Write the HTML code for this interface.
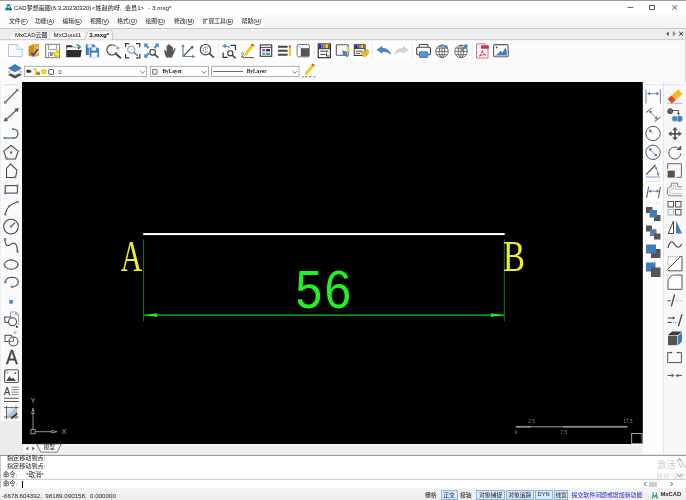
<!DOCTYPE html>
<html lang="zh-CN">
<head>
<meta charset="utf-8">
<title>CAD梦想画图</title>
<style>
*{box-sizing:border-box;margin:0;padding:0}
html,body{width:686px;height:500px;overflow:hidden;background:#f0f0f0}
body{font-family:"Liberation Sans","Noto Sans CJK SC",sans-serif;font-size:6px;color:#1a1a1a;position:relative}
.abs{position:absolute}
body>div{will-change:transform}
.t{position:absolute;white-space:nowrap;line-height:1}
svg{position:absolute;overflow:visible}
#titlebar{left:0;top:0;width:686px;height:15px;background:#fff;border-top:1px solid #9a9a9a}
#menubar{left:0;top:15px;width:686px;height:13px;background:linear-gradient(#f9f9f9,#f3f3f3)}
#tabbar{left:0;top:28px;width:686px;height:12px;background:#eeeeee;border-top:1px solid #c6c6c6}
#tb1{left:0;top:40px;width:686px;height:22px;background:#f9f9f9;border-top:1px solid #f3f3f3}
#tb2{left:0;top:62px;width:686px;height:20px;background:#f9f9f9}
#leftbar{left:0;top:82px;width:22px;height:373px;background:linear-gradient(90deg,#e4e8ee 0,#fbfbfb 1.500px,#f8f8f8 100%)}
#canvas{left:22px;top:82px;width:620px;height:362px;background:#000}
#rightbar{left:642px;top:82px;width:44px;height:373px;background:#f5f5f5}
#modelbar{left:22px;top:444px;width:620px;height:11px;background:linear-gradient(#f6f6f6,#efefef 25%,#efefef 75%,#f6f6f6)}
#cmd{left:0;top:455px;width:686px;height:33px;background:#fff;border-top:1px solid #9c9c9c}
#status{left:0;top:488px;width:686px;height:12px;background:linear-gradient(#f4f4f4,#eeeeee)}
.menu .t{top:4px;font-size:5.780px;color:#151515}
.menu u{text-decoration-thickness:0.500px;text-underline-offset:0.500px;text-decoration-color:#777}
.sbtn{position:absolute;top:2px;height:10px;border:1px solid #8fb2dc;background:#dce9f8}
</style>
</head>
<body>
<!-- title bar -->
<div id="titlebar" class="abs">
  <svg style="left:4.600px;top:3.200px" width="7.200" height="6.600" viewBox="0 0 9 9" preserveAspectRatio="none"><path d="M2.200 0.400h4.600v1.400H6.100l2.500 5H0.400l2.500-5H2.200z" fill="#2a8c84"/><path d="M0.400 6.400h8.200v2.200H0.400z" fill="#1d6b76"/><path d="M3.700 3h1.600l0.900 2.200H2.800z" fill="#dff2ee"/></svg>
  <span class="t" style="left:14px;top:3.900px;font-size:6px;color:#111">CAD梦想画图(6.3.20230320)</span>
  <span class="t" style="left:92px;top:3.900px;font-size:6.100px;color:#111">&lt;姓赵的呀, ,会员1&gt;</span>
  <span class="t" style="left:148.200px;top:3.900px;font-size:6.250px;color:#111">- 3.mxg*</span>
  <svg style="left:622px;top:-1px" width="64" height="15" viewBox="622 0 64 15">
    <path d="M627.600 7.400h5.600" stroke="#2a2a2a" stroke-width="0.800" fill="none"/>
    <rect x="649.700" y="5.300" width="4.700" height="4.400" stroke="#2a2a2a" stroke-width="0.800" fill="none"/>
    <path d="M672.500 5.200l4.500 4.500M677 5.200l-4.500 4.500" stroke="#2a2a2a" stroke-width="0.800" fill="none"/>
  </svg>
</div>
<!-- menu bar -->
<div id="menubar" class="abs menu">
  <div class="abs" style="left:0;top:0;width:264px;height:13px;background:#fbfbfb"></div>
  <span class="t" style="left:8.900px">文件(<u>F</u>)</span>
  <span class="t" style="left:35px">功能(<u>A</u>)</span>
  <span class="t" style="left:62.600px">编辑(<u>E</u>)</span>
  <span class="t" style="left:89.900px">视图(<u>V</u>)</span>
  <span class="t" style="left:117.200px">格式(<u>O</u>)</span>
  <span class="t" style="left:145.600px">绘图(<u>D</u>)</span>
  <span class="t" style="left:174px">修改(<u>M</u>)</span>
  <span class="t" style="left:202.700px">扩展工具(<u>E</u>)</span>
  <span class="t" style="left:241.800px">帮助(<u>H</u>)</span>
</div>
<!-- tab bar -->
<div id="tabbar" class="abs">
  <svg style="left:0;top:-1px" width="130" height="12" viewBox="0 28 130 12">
    <path d="M8.300 40L12.600 31.900Q13.100 31 14.200 31H48Q49.600 31 49.600 32.600V40z" fill="#f8f8f8" stroke="#d2d2d2" stroke-width="0.600"/>
    <path d="M49.600 40V32.600Q49.600 31 51.200 31H84Q85.600 31 85.600 32.600V40z" fill="#f8f8f8" stroke="#d2d2d2" stroke-width="0.600"/>
    <path d="M84.300 40L88 31.700Q88.400 30.800 89.600 30.800H111Q112.700 30.800 112.700 32.500V40z" fill="#fdfdfd" stroke="#b4b4b4" stroke-width="0.700"/>
  </svg>
  <span class="t" style="left:14.900px;top:2.600px;font-size:6px;color:#111">MxCAD云图</span>
  <span class="t" style="left:53.600px;top:2.600px;font-size:6.100px;color:#111">MxCloud1</span>
  <span class="t" style="left:89.200px;top:2.600px;font-size:6.100px;font-weight:bold;color:#000">3.mxg*</span>
  <div class="abs" style="left:0;top:10px;width:84px;height:1px;background:#cfcfcf"></div>
  <div class="abs" style="left:113px;top:10px;width:573px;height:1px;background:#cfcfcf"></div>
  <svg style="left:660px;top:-1px" width="26" height="12" viewBox="660 28 26 12">
    <path d="M668.700 31.400v4.600l-2.400-2.300z" fill="#3a3a3a"/><path d="M673.200 31.400v4.600l2.400-2.300z" fill="#9a9a9a" stroke="#555" stroke-width="0.400"/>
    <path d="M679.200 31.800l3.800 3.800M683 31.800l-3.800 3.800" stroke="#222" stroke-width="1" fill="none"/>
  </svg>
</div>
<!-- toolbar rows -->
<div id="tb1" class="abs">
<div class="abs" style="left:0;top:0;width:512px;height:22px;background:linear-gradient(#fefefe 70%,#fbfbfb)"></div>
<svg style="left:0;top:-1px" width="686" height="22" viewBox="0 40 686 22">
  <!-- 1 new -->
  <path d="M8.5 44.5h8.8l4.9 4.9v7.1H8.5z" fill="#f6f9fd" stroke="#a9bddb" stroke-width="0.9"/>
  <path d="M17.3 44.5v4.9h4.9" fill="#fff" stroke="#a9bddb" stroke-width="0.9"/>
  <!-- 2 orange doc -->
  <path d="M28.6 46.2l5.6-2.2v13l-5.6-1.3z" fill="#d78a20"/>
  <path d="M34.2 44h4.8v11.7l-4.8 1.3z" fill="#efa52d"/>
  <path d="M36 45.5l3 3v5l-3 1z" fill="#f6c25a"/>
  <path d="M31.3 52.8l2.1 2.6 4.4-6.4" stroke="#2a4da6" stroke-width="1.7" fill="none"/>
  <!-- 3 floppy -->
  <rect x="45.7" y="44.3" width="13.8" height="13.4" fill="#fafafa" stroke="#6e6e6e" stroke-width="0.9"/>
  <path d="M48.5 44.3v5.2h8v-5.2M48.5 57.5v-5h8.5" fill="none" stroke="#8a8a8a" stroke-width="0.8"/>
  <rect x="53" y="52" width="3.4" height="3" fill="#e8d52a"/><rect x="56" y="49.6" width="3.2" height="4.6" fill="#e8d52a"/>
  <rect x="54" y="55" width="4.6" height="2.4" fill="#dccb28"/><rect x="50" y="53" width="2.6" height="3" fill="#8d7fc0"/>
  <!-- 4 folder -->
  <path d="M66.2 45.2h5.2l1.4 1.6h6.7v2.2H66.2z" fill="#2d2d2d"/>
  <path d="M66.2 50h15.5l-1.2 7.2H66.2z" fill="#2d2d2d"/>
  <path d="M67 47.2h11v1.8H67z" fill="#f3f3f3"/>
  <path d="M76.3 44.6q3.3 0.2 4.3 3.2" fill="none" stroke="#3e9a86" stroke-width="1.2"/>
  <!-- 5 blue floppies -->
  <path d="M85.8 44.2h8l1.6 1.6v9.2h-9.6z" fill="#3f7cbc"/>
  <rect x="87.6" y="44.2" width="4.2" height="3.4" fill="#e8f0f8"/>
  <path d="M89.3 47.2h8.4l1.6 1.6v8.8h-10z" fill="#3f7cbc" stroke="#f4f7fb" stroke-width="0.7"/>
  <rect x="91.6" y="47.6" width="4.6" height="3" fill="#e8f0f8"/>
  <rect x="91.4" y="52.6" width="6" height="4.4" fill="#f4f7fb"/>
  <!-- 6 zoom in -->
  <path d="M115.5 46.2a5.1 5.1 0 1 0 1 6" fill="none" stroke="#4a4a4a" stroke-width="1.2"/>
  <path d="M115.3 53.2l5.6 5" stroke="#4a4a4a" stroke-width="1.9" fill="none"/>
  <path d="M115.6 48h4.4M117.8 45.6v4.8" stroke="#7f9dbd" stroke-width="1" fill="none"/>
  <!-- 7 zoom window -->
  <path d="M125.6 47.3v-3.7h3.8M136 43.6h3.8v3.7M139.8 54v3.8H136M129.4 57.8h-3.8V54" fill="none" stroke="#3a3a3a" stroke-width="1.2"/>
  <circle cx="131.3" cy="49.6" r="3.6" fill="#f4f8fc" stroke="#7e9fc4" stroke-width="1.1"/>
  <path d="M133.9 52.3l3.9 3.6" stroke="#6a7f99" stroke-width="1.5" fill="none"/>
  <!-- 8 zoom extents -->
  <g fill="#4a86c4"><path d="M144.2 43.6h4.2l-1.4 1.4 2.4 2.4-1.4 1.4-2.4-2.4-1.4 1.4z"/>
  <path d="M158.8 43.6v4.2l-1.4-1.4-2.4 2.4-1.4-1.4 2.4-2.4-1.4-1.4z"/>
  <path d="M144.2 57.8v-4.2l1.4 1.4 2.4-2.4 1.4 1.4-2.4 2.4 1.4 1.4z"/></g>
  <circle cx="152.6" cy="52.3" r="2.8" fill="#fff" stroke="#333" stroke-width="1.1"/>
  <path d="M154.7 54.5l3.6 3.3" stroke="#333" stroke-width="1.5" fill="none"/>
  <!-- 9 hand -->
  <path d="M166.2 57.4c-0.8-2-1.6-4.4-2-6.6-0.2-1 1-1.4 1.5-0.4l0.9 1.9v-6.400c0-1 1.500-1 1.500 0V44.800c0-1 1.600-1 1.600 0v1.100c0-1 1.600-1 1.600 0v1.300c0.200-0.900 1.500-0.800 1.500 0.200 0 1.400 0 2.400 0.400 3.600l1-2.200c0.500-0.900 1.600-0.400 1.300 0.500-0.700 2-1.400 3.500-2.300 5.200-0.600 1.200-0.800 2-0.900 2.900z" fill="#555"/>
  <!-- 10 axes -->
  <path d="M183 46v10.500h10.500" fill="none" stroke="#5b87b0" stroke-width="1.2"/>
  <path d="M183 43.800l1.700 3.200h-3.400zM195.400 56.500l-3.200 1.700v-3.400z" fill="#5b87b0"/>
  <path d="M183.600 56l8.200-8.600" stroke="#3d4a5a" stroke-width="1.100" fill="none"/>
  <path d="M193.500 45.700l-1 3.400-2.300-2.300z" fill="#3d4a5a"/>
  <!-- 11 zoom realtime -->
  <circle cx="205.500" cy="49.700" r="5.200" fill="#fbfbfb" stroke="#4a4a4a" stroke-width="1.200"/>
  <path d="M207.800 48.300a2.600 2.600 0 1 0 0.200 2.600" fill="none" stroke="#7a8ea6" stroke-width="0.900"/>
  <circle cx="205.600" cy="49.700" r="0.700" fill="#6a88aa"/>
  <path d="M209.200 53.400l4.800 4.200" stroke="#4a4a4a" stroke-width="1.800" fill="none"/>
  <path d="M218 42.500v17" stroke="#e2e2e2" stroke-width="0.800"/>
  <!-- 12 zoom previous -->
  <path d="M230.500 45.300h5v4.700M227.600 57.400h-4.500v-5" fill="none" stroke="#333" stroke-width="1.200"/>
  <circle cx="230.300" cy="53.300" r="2.600" fill="#fff" stroke="#333" stroke-width="1.100"/>
  <path d="M232.300 55.300l3.300 3" stroke="#333" stroke-width="1.400" fill="none"/>
  <path d="M229.600 47.500q-1.600-1.600-4.600-1.400" fill="none" stroke="#4a86c4" stroke-width="1.300"/>
  <path d="M222.200 46.100l3.400-2.300v4.400z" fill="#4a86c4"/>
  <!-- 13 pencil -->
  <path d="M243.600 56.300l1-3.200 6.200-8.200 2.500 1.900-6.200 8.200z" fill="#f3cd1e"/>
  <path d="M250.800 44.900l1.100-1.500 2.500 1.900-1.100 1.500z" fill="#d8452a"/>
  <path d="M243 57.600h11" stroke="#444" stroke-width="0.900"/>
  <path d="M241.300 53.300q1.200-1.200 2 0 0.300 1.200-2 3.600h2.600" fill="none" stroke="#2c3f8f" stroke-width="0.800"/>
  <!-- 14 table -->
  <rect x="260.300" y="44.900" width="11.400" height="11.400" fill="#fdfdfd" stroke="#444" stroke-width="1.200"/>
  <path d="M260.300 47.400h11.400" stroke="#444" stroke-width="1"/>
  <rect x="262.200" y="49" width="3" height="2.400" fill="#c432c8"/><rect x="266" y="49" width="4" height="2.400" fill="#2a2ad0"/>
  <rect x="262.200" y="52.600" width="3" height="2.400" fill="#35c55a"/><rect x="266" y="52.600" width="4" height="2.400" fill="#23b7a0"/>
  <!-- 15 lines -->
  <path d="M278 46.800h9.600M278 50.800h9.600M278 54.800h9.600" stroke="#444" stroke-width="1.900"/>
  <rect x="288.900" y="47" width="2" height="9" fill="#f0c81e"/><rect x="288.900" y="45.400" width="2" height="1.800" fill="#d8452a"/>
  <!-- 16 box -->
  <rect x="297.100" y="44.500" width="12.300" height="12.300" rx="1.500" fill="#fbfcfe" stroke="#777" stroke-width="1"/>
  <rect x="300.800" y="48.200" width="8.200" height="8.200" fill="#555"/>
  <path d="M297.600 45l3.200 3.200" stroke="#9ab0cc" stroke-width="0.900"/>
  <path d="M314 42.500v17" stroke="#e2e2e2" stroke-width="0.800"/>
  <!-- 17 palette -->
  <rect x="318.200" y="43.900" width="12.200" height="13.800" fill="#fff" stroke="#222" stroke-width="1.100"/>
  <rect x="318.800" y="44.400" width="2.400" height="4" fill="#2222b8"/><rect x="321.200" y="44.400" width="2.300" height="4" fill="#b030c0"/>
  <rect x="323.500" y="44.400" width="2.300" height="4" fill="#30b040"/><rect x="325.800" y="44.400" width="2.200" height="4" fill="#e8d020"/><rect x="328" y="44.400" width="1.900" height="4" fill="#d83030"/>
  <path d="M318.200 48.700h12.200" stroke="#222" stroke-width="0.900"/>
  <path d="M320.300 51.200h8M320.300 54.400h5M326.500 52.500v3.500h2.500" stroke="#333" stroke-width="1" fill="none"/>
  <!-- 18 select window -->
  <rect x="336.300" y="44.700" width="12" height="10.600" rx="0.800" fill="#fcfcfc" stroke="#555" stroke-width="1.100"/>
  <path d="M346 47.500l3.200-0.500 0.600 5-2.600 1z" fill="#ead44a"/>
  <path d="M342.200 50.300l6.400 2-2.300 1.200 2 3-1.400 0.900-2-3-1.700 1.800z" fill="#4a7fc4"/>
  <!-- 19 palette hand -->
  <rect x="354.300" y="44.700" width="10.800" height="10.800" fill="#fff" stroke="#333" stroke-width="1"/>
  <rect x="354.800" y="45.200" width="2.200" height="3" fill="#2222b8"/><rect x="357" y="45.200" width="2" height="3" fill="#b030c0"/>
  <rect x="359" y="45.200" width="2" height="3" fill="#30b040"/><rect x="361" y="45.200" width="2" height="3" fill="#e8d020"/><rect x="363" y="45.200" width="1.600" height="3" fill="#d83030"/>
  <path d="M354.300 48.600h10.800M356 51.200h6M356 53.400h4" stroke="#333" stroke-width="0.900"/>
  <path d="M360.800 52.200l2.200-1.300 1.600 1 2.600-2.800 1.400 1.200-0.300 3.700-2.600 2.700-3.200-0.400z" fill="#e6bd22" stroke="#b8921a" stroke-width="0.400"/>
  <path d="M372.400 42.500v17" stroke="#e2e2e2" stroke-width="0.800"/>
  <!-- 20 undo -->
  <path d="M376.400 49.700l6-4v2.400c4.800 0 8 2.600 8.800 7.200-2.200-2.500-5-3.500-8.800-3.500v2.100z" fill="#4b87c3"/>
  <!-- 21 redo -->
  <path d="M408.800 49.700l-6-4v2.400c-4.800 0-8 2.600-8.800 7.200 2.200-2.500 5-3.500 8.800-3.500v2.100z" fill="#d2d2d2"/>
  <path d="M412.300 42.500v17" stroke="#e2e2e2" stroke-width="0.800"/>
  <!-- 22 printer -->
  <path d="M419.300 47.200v-2.700h8.600v2.700" fill="#fff" stroke="#444" stroke-width="1"/>
  <rect x="416.700" y="47.200" width="13.800" height="7.600" rx="1.300" fill="#fdfdfd" stroke="#444" stroke-width="1.100"/>
  <rect x="419.500" y="51.800" width="8.200" height="5.600" rx="0.600" fill="#5d97d8" stroke="#3b6ea6" stroke-width="0.900"/>
  <!-- 23 globe -->
  <g fill="none" stroke="#666" stroke-width="0.900"><circle cx="442" cy="51.400" r="6.300" fill="#fafafa"/>
  <ellipse cx="442" cy="51.400" rx="2.700" ry="6.300"/><path d="M435.700 51.400h12.600M436.700 48.200h10.600M436.700 54.700h10.600M442 45.100v12.600"/></g>
  <path d="M438 46.600q4-3.800 8.400-0.800l0.600-1.300 1 3.700-3.700-0.400 0.900-1q-3.200-1.700-6 0.800z" fill="#4a82bd"/>
  <!-- 24 globe 2 -->
  <g fill="none" stroke="#666" stroke-width="0.900"><circle cx="461" cy="51.400" r="6.300" fill="#fafafa"/>
  <ellipse cx="461" cy="51.400" rx="2.700" ry="6.300"/><path d="M454.700 51.400h12.600M455.700 48.200h10.600M455.700 54.700h10.600M461 45.100v12.600"/></g>
  <path d="M467.600 44.200l-0.300 4.600-1.500-1.300-3.400 3.600-1.300-1.200 3.400-3.600-1.500-1.400z" fill="#4a82bd"/>
  <path d="M472.200 42.500v17" stroke="#e2e2e2" stroke-width="0.800"/>
  <!-- 25 pdf -->
  <path d="M476.600 43.800h8.400l3 3v11.200h-11.400z" fill="#fffafa" stroke="#d45a72" stroke-width="0.900"/>
  <rect x="481" y="45.300" width="7.800" height="3.400" rx="0.500" fill="#d8304f"/>
  <path d="M479.300 56c1.600-1.200 2.700-3.200 3-5.300 0.600 2.200 2 3.600 3.700 4.200-2.300-0.300-4.600 0.100-6.700 1.100z" fill="none" stroke="#d8304f" stroke-width="0.900"/>
  <!-- 26 image -->
  <rect x="493.600" y="44.600" width="14.600" height="12.200" rx="1.300" fill="#fcfdff" stroke="#5a5a5a" stroke-width="1.100"/>
  <path d="M496 55.400l4.600-4.600 1.800 1.800 3-5 1.400 3.400v4.400z" fill="#4a7fb0"/>
  <path d="M494.600 55.200h12.600v1h-12.600z" fill="#9db9d6"/>
  <circle cx="496.700" cy="47.400" r="0.900" fill="#444"/>
</svg>
</div>
<div id="tb2" class="abs">
<div class="abs" style="left:0;top:0;width:320px;height:20px;background:linear-gradient(#fbfbfb,#fdfdfd 30%,#fafafa)"></div>
<div class="abs" style="left:685px;top:-34px;width:1px;height:54px;background:#d4d8e0"></div>
<svg style="left:0;top:0" width="686" height="20" viewBox="0 62 686 20">
  <!-- layers -->
  <path d="M8 74.800l7-3.400 7 3.400-7 3.800z" fill="#4a4a4a"/>
  <path d="M8 72l7-3.400 7 3.400-7 3.600z" fill="#f4f4f4" stroke="#8f8f8f" stroke-width="0.600"/>
  <path d="M8 68.200l7-4.100 7 4.100-7 4.100z" fill="#3f7cbc"/>
  <!-- dropdown 1 -->
  <rect x="24.300" y="66.300" width="122.300" height="10.200" fill="#fff" stroke="#9c9c9c" stroke-width="0.800"/>
  <path d="M26.300 70.200l2.200-0.700 2.800 0.900v1.800l-2.800 0.800-2.200-0.700z" fill="#333"/>
  <path d="M33 69.600q1.500-1.600 3 0v2" fill="none" stroke="#e8961e" stroke-width="1.100"/>
  <rect x="35.400" y="71.600" width="4.400" height="3.400" fill="#d89a20"/><rect x="37.400" y="72.500" width="2.400" height="2.500" fill="#5aa03a"/>
  <circle cx="43.800" cy="71.800" r="2.700" fill="#f3c91c"/><circle cx="43.800" cy="71.800" r="1.100" fill="#f7e060"/>
  <rect x="48.700" y="69.500" width="4.800" height="4.900" rx="0.800" fill="#fff" stroke="#444" stroke-width="0.900"/>
  <path d="M140.200 71l2.300 2.200 2.300-2.200" fill="none" stroke="#555" stroke-width="0.800"/>
  <!-- dropdown 2 -->
  <rect x="150.300" y="66.300" width="58.200" height="10.200" fill="#fff" stroke="#9c9c9c" stroke-width="0.800"/>
  <rect x="152.600" y="69.400" width="4.400" height="4.800" rx="0.500" fill="#fff" stroke="#444" stroke-width="0.800"/>
  <path d="M201.600 71l2.300 2.200 2.300-2.200" fill="none" stroke="#555" stroke-width="0.800"/>
  <!-- dropdown 3 -->
  <rect x="211.600" y="66.300" width="87.400" height="10.200" fill="#fff" stroke="#9c9c9c" stroke-width="0.800"/>
  <path d="M213.400 71.500h29.600" stroke="#444" stroke-width="0.800"/>
  <path d="M292.600 71l2.300 2.200 2.300-2.200" fill="none" stroke="#555" stroke-width="0.800"/>
  <!-- pencil -->
  <path d="M304.600 75.400l1-3.300 5.800-7.400 2.500 1.900-5.800 7.400z" fill="#f3cd1e"/>
  <path d="M311.400 64.700l1-1.300 2.500 1.900-1 1.300z" fill="#d8452a"/>
  <path d="M302 76.800h1.600M305 76.800h2.400" stroke="#666" stroke-width="1.100"/>
  <path d="M309 76.800h2.600M313.400 76.800h2" stroke="#4a7fc4" stroke-width="1.100"/>
</svg>
<span class="t" style="left:58.300px;top:7.300px;font-size:6px;color:#3a3a3a">0</span>
<span class="t" style="left:162.500px;top:7.400px;font-size:5.300px;font-family:'Liberation Serif','Noto Serif CJK SC',serif;font-weight:bold;color:#222">ByLayer</span>
<span class="t" style="left:246.800px;top:7.400px;font-size:5.300px;font-family:'Liberation Serif','Noto Serif CJK SC',serif;font-weight:bold;color:#222">ByLayer</span>
</div>
<!-- side bars -->
<div id="leftbar" class="abs">
<div class="abs" style="left:1px;top:339px;width:21px;height:34px;background:#ececec"></div>
<svg style="left:0;top:0" width="22" height="362" viewBox="0 82 22 362">
  <path d="M3.500 84.800h14.500" stroke="#b9c0c8" stroke-width="0.900" stroke-dasharray="1 1"/>
  <g fill="none" stroke="#444" stroke-width="1.050">
    <!-- line -->
    <path d="M5.200 102.300L17.300 90.200"/>
    <!-- double arrow -->
    <path d="M6 119.600L16.600 109.800"/>
    <!-- arc line -->
    <path d="M4.500 138h9.500c5.500 0 5.500-8.800-1-9"/>
    <!-- pentagon -->
    <path d="M11 145.500l7.300 5.600-2.800 7.800h-9l-2.800-7.800z"/>
    <!-- polygon -->
    <path d="M10.500 164l6.500 6.200-1.500 7.200h-9v-8.900z"/>
    <!-- rectangle -->
    <rect x="5.200" y="185.600" width="12.200" height="7.500"/>
    <!-- arc -->
    <path d="M5.200 214.300c1.500-7 5.500-10.800 12.300-12.300"/>
    <!-- circle -->
    <circle cx="11" cy="226.600" r="7.300"/><path d="M11 226.600l4-4"/>
    <!-- spline -->
    <path d="M5 239.200c0 9 4.500 6.500 7 4.500 3-2.300 5.500 1.500 5.500 7.500"/>
    <!-- ellipse -->
    <ellipse cx="11.200" cy="264.600" rx="6.800" ry="4.600"/>
    <!-- ellipse arc -->
    <path d="M5.300 281.500c1.500-5.800 12-5.800 13 0 0.600 3.500-3 5.200-6.300 5.500"/>
    <!-- insert block -->
    <path d="M10.500 317v-5h5.200l2.800 2.800v9.200h-2" stroke="#8fb0d0"/>
    <path d="M15.700 312v2.800h2.800" stroke="#8fb0d0"/>
    <path d="M8 322.500h-3.300v-5.500h6.500"/>
    <circle cx="12.500" cy="321.700" r="4" fill="#fbfbfb"/>
    <!-- make block -->
    <path d="M8.500 341.500h-3.500v-6.300h6.300v1.500"/>
    <circle cx="13.500" cy="341.500" r="4.500" fill="#fbfbfb"/>
    <path d="M13.500 337v4.500h-4.500" stroke-width="0.700"/>
    <path d="M15 330.500v4M13 332.500h4" stroke="#a9a9a9" stroke-width="0.800"/>
    <!-- image -->
    <rect x="4.600" y="369.800" width="13.800" height="12.600" rx="1.200" fill="#fdfdfd" stroke="#555"/>
    <!-- hatch -->
    <path d="M6.500 405.800v13.500M16 405.800v13.500M4 407.600h14.600M4 417h14.600" stroke="#555" stroke-width="0.900"/>
  </g>
  <path d="M18.800 107.800l-1.300 4.400-3.200-3.300zM3.800 121.700l1.300-4.400 3.200 3.300z" fill="#555"/>
  <path d="M16 325.200l2.600 2.200h-2.600z" fill="#111"/>
  <g fill="#5f88b3">
    <rect x="4" y="101.100" width="2.500" height="2.500"/><rect x="16" y="88.900" width="2.500" height="2.500"/>
    <circle cx="10" cy="116" r="0.900"/><circle cx="12.600" cy="113.500" r="0.900"/>
    <rect x="3.600" y="137" width="2" height="2"/><rect x="12.800" y="137" width="2" height="2"/><rect x="12" y="128" width="2" height="2"/>
    <rect x="10" y="151.400" width="2.200" height="2.200" fill="#46607e"/><rect x="5.600" y="157.300" width="2.200" height="2.200"/>
    <rect x="14" y="176" width="2.200" height="2.200"/>
    <rect x="16.300" y="184.500" width="2.200" height="2.200"/><rect x="4.100" y="192" width="2.200" height="2.200"/>
    <rect x="4.100" y="213.200" width="2.200" height="2.200"/><rect x="8.300" y="205" width="2.200" height="2.200"/><rect x="16.400" y="200.900" width="2.200" height="2.200"/>
    <rect x="9.900" y="225.500" width="2.200" height="2.200"/>
    <rect x="3.900" y="238" width="2.400" height="2.400"/><rect x="16.300" y="250.300" width="2.400" height="2.400"/>
    <rect x="3.500" y="263.600" width="2" height="2"/><rect x="17" y="263.600" width="2" height="2"/><rect x="10.200" y="259" width="2" height="2"/>
    <rect x="4.200" y="280.800" width="2.300" height="2.300"/><rect x="10.800" y="285.800" width="2.300" height="2.300"/>
    <rect x="9.300" y="300" width="3.500" height="3.700" fill="#4a7fb5"/>
    <rect x="4" y="320" width="2" height="2.600" fill="#7fa3c8"/>
    <rect x="4.300" y="338" width="1.600" height="3.400" fill="#8fb0d0"/>
  </g>
  <path d="M6.400 381l3-5 2 3 1.600-1.600 3 3.600z" fill="#444"/>
  <circle cx="15.400" cy="373.200" r="0.900" fill="#444"/><circle cx="6.800" cy="372.200" r="1.300" fill="none" stroke="#6f98c4" stroke-width="0.700"/>
  <path d="M11.600 387.200h7M11.600 389.700h7M11.600 392.200h7M11.600 394.600h7" stroke="#666" stroke-width="0.800"/>
  <path d="M4 398.200h14.600M4 401.500h14.600" stroke="#555" stroke-width="1.100"/>
  <path d="M7 416.500l9-8.500v8.500zM7 412.500l5-4.500M7 415l7.500-7" fill="#a8c4e0" stroke="#86a8cc" stroke-width="0.600"/>
  <path d="M10.800 419.300l0.700-2.300 5.300-4.300 1 1.200-5 4.500z" fill="#333"/>
</svg>
<span class="t" style="left:5.600px;top:264.700px;font-size:20px;color:#444;-webkit-text-stroke:0.350px #444;transform:scaleX(0.880);transform-origin:0 0">A</span>
<span class="t" style="left:4.300px;top:304.600px;font-size:10.300px;color:#444;-webkit-text-stroke:0.250px #444;transform:scaleX(0.900);transform-origin:0 0">A</span>
</div>
<div id="rightbar" class="abs">
<div class="abs" style="left:0;top:0;width:21px;height:373px;background:#fcfcfc"></div><div class="abs" style="left:0;top:0;width:1px;height:362px;background:#2e2e2e"></div>
<div class="abs" style="left:22px;top:0;width:22px;height:373px;background:#f8f8f8"></div>
<div class="abs" style="left:21px;top:0;width:1px;height:373px;background:#e6e6e6"></div>
<svg style="left:0;top:0" width="44" height="373" viewBox="642 82 44 373">
  <path d="M645 84.800h38.500" stroke="#c3c7cc" stroke-width="0.900" stroke-dasharray="1 1"/>
  <!-- col1: linear dim -->
  <path d="M646 89.500v14M660.400 89.500v14" stroke="#7d90a8" stroke-width="1.100" fill="none"/>
  <path d="M648.500 93.600h9.500" stroke="#5b87b0" stroke-width="0.900"/>
  <path d="M647 93.600l3-1.700v3.400zM659.400 93.600l-3-1.700v3.400z" fill="#4a7ab0"/>
  <!-- aligned dim -->
  <path d="M646 112.600l6-4.600M654.600 121.600l6-4.600" stroke="#555" stroke-width="1" fill="none"/>
  <path d="M649.500 111l7.600 7.800" stroke="#6a7f99" stroke-width="0.900"/>
  <path d="M649 110.400l3.300 1-2.300 2.300zM657.700 119.400l-3.300-1 2.300-2.300z" fill="#4a7ab0"/>
  <!-- radius -->
  <circle cx="653" cy="133.500" r="7.200" fill="#fdfdfd" stroke="#555" stroke-width="1"/>
  <path d="M653 133.500l-3-3" stroke="#5b87b0" stroke-width="0.900"/><path d="M648.800 129.300l3.400 0.900-2.500 2.500z" fill="#4a7ab0"/>
  <!-- diameter -->
  <circle cx="653" cy="152.300" r="7.200" fill="#fdfdfd" stroke="#555" stroke-width="1"/>
  <path d="M650 149.300l6 6" stroke="#5b87b0" stroke-width="0.900"/><path d="M648.800 148.100l3.400 0.900-2.500 2.500zM657.200 156.500l-3.400-0.900 2.500-2.500z" fill="#4a7ab0"/>
  <!-- angle -->
  <path d="M646 174.600l9.600-9.600" stroke="#444" stroke-width="1.100"/>
  <path d="M646 177h14.200" stroke="#8a9bb0" stroke-width="1"/>
  <path d="M655.600 168q2.600 3 2.600 6.600" fill="none" stroke="#5b87b0" stroke-width="0.900"/>
  <path d="M654.900 166.800l2.600 0.900-1.800 1.700zM658.200 176.200l-1.400-2.600h2.800z" fill="#4a7ab0"/>
  <path d="M646 181.300h14.200" stroke="#d6d6d6" stroke-width="0.800"/>
  <!-- dim continue -->
  <path d="M648.600 186.800l-2 11.200M660.400 186.800l-2 11.200" stroke="#555" stroke-width="1" fill="none"/>
  <path d="M650 191.200h8" stroke="#5b87b0" stroke-width="0.900"/>
  <path d="M648.200 191.200l3-1.600v3.200zM659.600 191.200l-3-1.600v3.200z" fill="#4a7ab0"/>
  <path d="M646 203h14.200" stroke="#cfcfcf" stroke-width="0.800" stroke-dasharray="1 1"/>
  <!-- layer order -->
  <rect x="646" y="207" width="6.500" height="6" fill="#555"/><rect x="654" y="215" width="6.500" height="6" fill="#555"/><rect x="649.500" y="210" width="7.500" height="7.500" fill="#3f7cbc"/>
  <rect x="646" y="225.500" width="6" height="6" fill="#555"/><rect x="650" y="229.200" width="6.500" height="6.800" fill="#5a7ab0"/><rect x="654" y="233.500" width="6.500" height="6" fill="#555"/>
  <rect x="651" y="249" width="9.500" height="9" fill="#555"/><rect x="646" y="244.500" width="10" height="9" fill="#3f7cbc"/>
  <rect x="646" y="262.500" width="9.500" height="9" fill="#3f7cbc"/><rect x="651" y="267.500" width="9.500" height="9.500" fill="#555"/>
  <!-- col2: eraser -->
  <path d="M671.600 95.400l6.800-6 4.200 4.600-6.800 6z" fill="#f7ba1c"/>
  <path d="M667.600 99l4-3.600 4.200 4.600-4 3.400z" fill="#e8452a"/>
  <path d="M667.500 103.300h14.500" stroke="#8ea4c0" stroke-width="0.800"/>
  <!-- copy -->
  <circle cx="670.200" cy="111.200" r="2.500" fill="#666" stroke="#333" stroke-width="0.800"/>
  <path d="M673 110.500h5.500v3" fill="none" stroke="#444" stroke-width="0.900"/><path d="M678.500 115.200l-1.500-2.200h3z" fill="#444"/>
  <circle cx="679.500" cy="118.700" r="3" fill="#3f7cbc"/><circle cx="674.800" cy="118.700" r="3" fill="#4a86c4" stroke="#f9f9f9" stroke-width="0.500"/>
  <!-- move -->
  <path d="M675 127l2.800 3.300h-1.900v2.600h2.600v-1.900l3.300 2.800-3.300 2.800v-1.900h-2.600v2.600h1.900l-2.800 3.300-2.800-3.300h1.900v-2.600h-2.600v1.900l-3.300-2.800 3.300-2.800v1.900h2.600v-2.600h-1.900z" fill="#555"/>
  <!-- rotate -->
  <path d="M677.500 147.700a6 6 0 1 0 3.300 5.800" fill="none" stroke="#555" stroke-width="1"/>
  <path d="M681.200 145.300v4.800h-5z" fill="#555"/>
  <!-- scale -->
  <path d="M667.700 169v-5.300h13.700v13.700h-5" fill="none" stroke="#666" stroke-width="1"/>
  <rect x="667.600" y="170.600" width="7.200" height="7" fill="#555"/>
  <!-- stretch -->
  <path d="M682 186.800H677.800V183.200H671.200V186.800H670.200Q667.400 186.800 667.400 190V193Q667.400 195.800 670.200 195.800H682" fill="none" stroke="#858585" stroke-width="1"/>
  <path d="M682 189.300H675.600V185.400H673.400V189.300H671.600Q669.700 189.300 669.700 191V192Q669.700 193.500 671.600 193.500H682" fill="none" stroke="#b0bcc8" stroke-width="0.800"/>
  <!-- array -->
  <rect x="668" y="201.500" width="5.500" height="5.500" fill="none" stroke="#555" stroke-width="1"/><rect x="675.500" y="201.500" width="5.500" height="5.500" fill="none" stroke="#555" stroke-width="1"/>
  <rect x="668" y="209.500" width="5.500" height="5.500" fill="none" stroke="#9fb6cf" stroke-width="1"/><rect x="675.500" y="209.500" width="5.500" height="5.500" fill="none" stroke="#555" stroke-width="1"/>
  <!-- mirror -->
  <path d="M668.300 233.500l5.200-12.500v12.500z" fill="#fdfdfd" stroke="#444" stroke-width="1"/>
  <path d="M676 220.500l6 13h-6z" fill="#3f7cbc"/>
  <!-- spline -->
  <path d="M668 248.200c1-5 3-8 5.300-5.500 2 2.300 3.200 5 5 4.600 1.700-0.400 2.700-1.700 3.700-3.300" fill="none" stroke="#444" stroke-width="1.100"/>
  <!-- chamfer -->
  <path d="M668 269l12.500-12.500h1.500v14.300h-14z" fill="#fdfdfd" stroke="#555" stroke-width="1"/>
  <path d="M668 257v11M668 256.600h12" stroke="#777" stroke-width="0.800" stroke-dasharray="1 1.200" fill="none"/>
  <!-- fillet -->
  <path d="M668 283c0-5 3-8 7.500-8h6.500v14.300h-14z" fill="#fdfdfd" stroke="#555" stroke-width="1"/>
  <path d="M668 275.200h7M668 275.200v7" stroke="#999" stroke-width="0.700" stroke-dasharray="1 1.200" fill="none"/>
  <!-- break -->
  <path d="M671.300 306.300l3.300-12" stroke="#444" stroke-width="1.300"/>
  <path d="M667.500 300.700h3.200" stroke="#555" stroke-width="1.100"/><path d="M675.300 300.700h2.700M679.500 300.700h2.700" stroke="#c2c2c2" stroke-width="1.100"/>
  <!-- extend -->
  <path d="M667.600 318h5.400M667.600 322.500h4" stroke="#444" stroke-width="1"/><path d="M675.400 318l-2.600-1.500v3z" fill="#444"/>
  <path d="M673 322.500h4.500" stroke="#6f9fd8" stroke-width="1" stroke-dasharray="1 0.800"/>
  <path d="M678.400 326.300l3.600-12" stroke="#444" stroke-width="1.300"/>
  <!-- 3d box -->
  <path d="M668 335l4-3.500h10l-4 3.500z" fill="#3a3a3a"/><rect x="668" y="335.600" width="9.300" height="9.600" fill="#555"/>
  <path d="M678 336l4-3.500v9l-4 3.700z" fill="#3f7cbc"/>
  <!-- bracket box -->
  <path d="M672 352.600h-4.300v10h13.700v-10h-4.300" fill="none" stroke="#555" stroke-width="1"/>
  <path d="M672.600 352.600l-2-1.200v2.400zM676.400 352.600l2-1.200v2.400z" fill="#555"/>
  <!-- join -->
  <path d="M667.600 375.500h5.400M682 375.500h-5.400" stroke="#555" stroke-width="1"/>
  <path d="M674.600 375.500l-3-2v4zM675.400 375.500l3-2v4z" fill="#4a6a90"/>
</svg>
</div>
<!-- drawing canvas -->
<div id="canvas" class="abs">
  <svg style="left:0;top:0" width="620" height="362" viewBox="22 82 620 362">
    <rect x="143.200" y="233" width="361.500" height="2.100" fill="#fff"/>
    <g fill="none">
      <path d="M143.600 239.500V321.200M504.300 239.500V321.200" stroke="#168a26" stroke-width="0.900"/>
      <path d="M144 315.100H504" stroke="#059205" stroke-width="1.700"/>
    </g>
    <path d="M144.400 315.100l12.800-1.800v3.600z" fill="#1cf01c"/>
    <path d="M503.600 315.100l-12.800-1.800v3.600z" fill="#1cf01c"/>
    <text x="0" y="0" transform="translate(295.500 307.600) scale(0.890 1)" letter-spacing="2.600" font-family="'Liberation Sans',sans-serif" font-size="53.800" fill="#22f022">56</text>
    <text x="131.500" y="271" text-anchor="middle" font-family="'Liberation Serif',serif" font-size="45" fill="#f0ee28" transform="translate(131.500 0) scale(0.660 1) translate(-131.500 0)">A</text>
    <text x="514" y="271" text-anchor="middle" font-family="'Liberation Serif',serif" font-size="44.500" fill="#f0ee28" transform="translate(514 0) scale(0.740 1) translate(-514 0)">B</text>
    <!-- UCS icon -->
    <g stroke="#b4b4b4" stroke-width="0.800" fill="none">
      <rect x="30.900" y="429.600" width="4.200" height="4.200"/>
      <path d="M33 429.600V413.600M31.700 413.600L33 408.200l1.300 5.400zM35.100 431.700H51.800M51.800 430.400l5.200 1.300-5.200 1.300z"/>
    </g>
    <text x="33.100" y="403.300" text-anchor="middle" font-family="'Liberation Sans',sans-serif" font-size="7" fill="#a8a8a8">Y</text>
    <text x="64.200" y="434.300" text-anchor="middle" font-family="'Liberation Sans',sans-serif" font-size="7" fill="#a8a8a8">X</text>
    <!-- scale bar -->
    <g fill="#8e8e8e">
      <rect x="515.800" y="425.900" width="15.700" height="1.800"/>
      <rect x="531.500" y="426.300" width="31.500" height="1" fill="#9c9c9c"/>
      <rect x="563" y="425.900" width="64.400" height="1.800"/>
    </g>
    <g font-family="'Liberation Sans',sans-serif" font-size="4.600" fill="#8a8a8a" text-anchor="middle">
      <text x="531.500" y="423.200">2.5</text><text x="628" y="423.200">17.5</text>
      <text x="516" y="434">0</text><text x="563.800" y="434">7.5</text>
    </g>
    <rect x="631.700" y="433.400" width="10.500" height="10.300" fill="#000" stroke="#c8c8c8" stroke-width="0.800"/>
  </svg>
</div>
<!-- model tab bar -->
<div id="modelbar" class="abs">
  <svg style="left:0;top:0" width="110" height="11" viewBox="22 444 110 11">
    <rect x="22.800" y="444.600" width="14.400" height="8.800" fill="#fafafa" stroke="#dcdcdc" stroke-width="0.600"/>
    <path d="M28.300 446.600v4l-2.400-2zM32.300 446.600v4l2.400-2z" fill="#555"/>
    <path d="M36.700 444L40.800 452.200H57.100L61.200 444z" fill="#fdfdfd" stroke="#4a4a4a" stroke-width="0.700"/>
  </svg>
  <span class="t" style="left:21.700px;top:1.400px;font-size:5.600px;color:#222">模型</span>
</div>
<!-- command area -->
<div id="cmd" class="abs">
  <span class="t" style="left:6.900px;top:-0.800px;font-size:6.150px">指定移动到点:</span>
  <span class="t" style="left:6.900px;top:7px;font-size:6.150px">指定移动到点:</span>
  <span class="t" style="left:3px;top:15.700px;font-size:6.250px">命令:</span>
  <span class="t" style="left:26.300px;top:15.700px;font-size:6.250px">*取消*</span>
  <div class="abs" style="left:0;top:23px;width:686px;height:1px;background:#cfcfcf"></div>
  <div class="abs" style="left:0;top:0;width:1px;height:32px;background:#c8c8c8"></div>
  <span class="t" style="left:3px;top:25.100px;font-size:6.250px">命令:</span>
  <div class="abs" style="left:22px;top:25px;width:1px;height:7px;background:#000"></div>
  <div class="abs" style="left:676px;top:0;width:10px;height:23px;background:#fdfdfd"></div>
  <div class="abs" style="left:642px;top:24px;width:44px;height:9px;background:#fcfcfc"></div>
  <div class="abs" style="left:649.200px;top:25.600px;width:8px;height:5.600px;background:#cdcdcd"></div>
  <svg style="left:640px;top:0" width="46" height="33" viewBox="640 456 46 33">
    <path d="M677.400 461.200l2.200-2.200 2.200 2.200M677.400 474.200l2.200 2.200 2.200-2.200" stroke="#4a4a4a" stroke-width="0.900" fill="none"/>
    <path d="M646.400 482l-2 2 2 2M670.600 482l2 2-2 2" stroke="#4a4a4a" stroke-width="0.900" fill="none"/>
  </svg>
  <div class="abs" style="left:650px;top:0;width:36px;height:24px;overflow:hidden">
    <span class="t" style="left:6.400px;top:4.300px;font-size:9.600px;color:#c4c4c4;opacity:0.850">激活 Windows</span>
    <span class="t" style="left:6.400px;top:17.500px;font-size:6.600px;color:#cfcfcf;opacity:0.850">转到"设置"以激活 Windows。</span>
  </div>
</div>
<div class="abs" style="left:0;top:454px;width:686px;height:1px;background:#e4e4e4"></div>
<!-- status bar -->
<div id="status" class="abs">
  <span class="t" style="left:2px;top:4.600px;font-size:6.200px">-6678.604392,&nbsp; 98189.090158,&nbsp; 0.000000</span>
  <span class="t" style="left:425px;top:4.900px;font-size:5.800px">栅格</span>
  <div class="sbtn" style="left:440.500px;width:17px"></div>
  <span class="t" style="left:443.200px;top:4.900px;font-size:5.800px">正交</span>
  <span class="t" style="left:460px;top:4.900px;font-size:5.800px">极轴</span>
  <div class="sbtn" style="left:476px;width:29px"></div>
  <span class="t" style="left:479px;top:4.900px;font-size:5.800px">对象捕捉</span>
  <div class="sbtn" style="left:505.800px;width:28px"></div>
  <span class="t" style="left:508.200px;top:4.900px;font-size:5.800px">对象追踪</span>
  <div class="sbtn" style="left:535px;width:17.500px"></div>
  <span class="t" style="left:537.600px;top:4.300px;font-size:5.700px">DYN</span>
  <div class="sbtn" style="left:554px;width:14.200px"></div>
  <span class="t" style="left:555.400px;top:4.900px;font-size:5.700px">线宽</span>
  <span class="t" style="left:571.500px;top:4.900px;font-size:5.920px;color:#1a1ad8">提交软件问题或增加新功能</span>
  <svg style="left:651.400px;top:3.800px" width="7.600" height="6.800" viewBox="0 0 9 9" preserveAspectRatio="none"><path d="M0.500 8.500L2.600 1.200 4.500 5.200 6.400 1.200 8.500 8.500 6.600 8.500 5.900 5.300 4.500 8 3.100 5.300 2.400 8.500z" fill="#22a08a"/><circle cx="2.600" cy="1.300" r="1" fill="#22a08a"/><circle cx="6.400" cy="1.300" r="1" fill="#22a08a"/></svg>
  <span class="t" style="left:660.400px;top:4.400px;font-size:5.850px;font-weight:bold;color:#2a2a2a">MxCAD</span>
</div>
</body>
</html>
